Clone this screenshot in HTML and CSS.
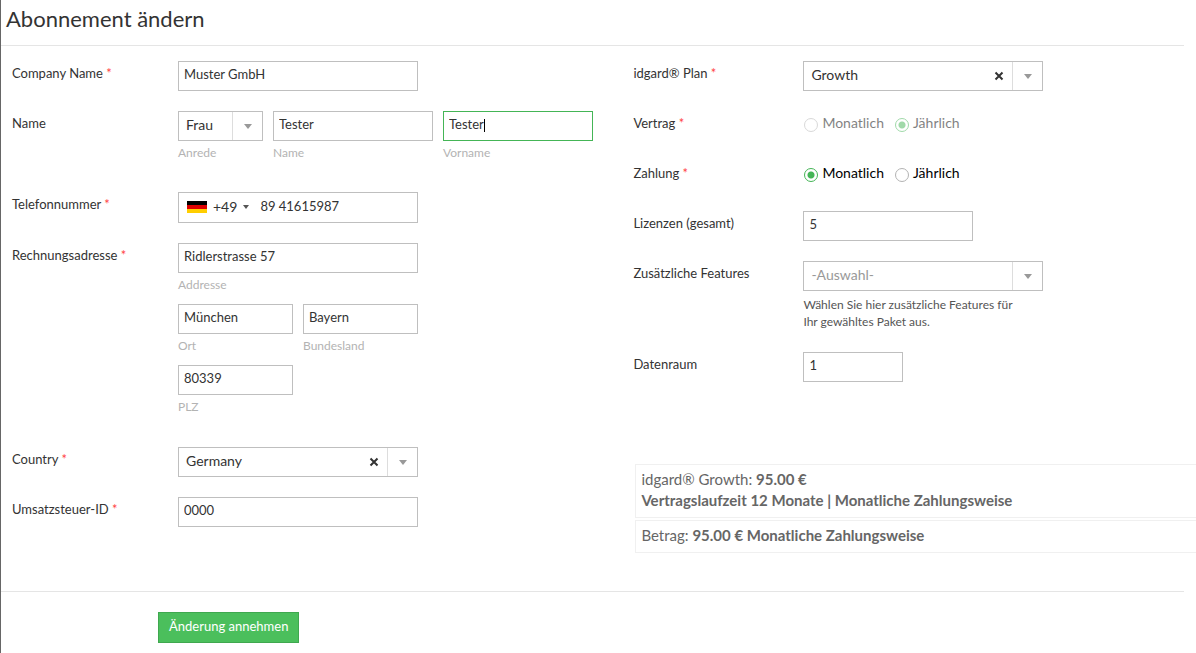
FILE: index.html
```html
<!DOCTYPE html>
<html lang="de">
<head>
    <meta charset="UTF-8">
    <meta name="viewport" content="width=device-width, initial-scale=1.0">
    <title>Abonnement ändern</title>
    <link rel="stylesheet" href="styles.css">
</head>
<body>

    <h1>Abonnement ändern</h1>

    <form>
        <div class="columns">

            <!-- Customer data -->
            <div class="column">
                <div class="row">
                    <label class="label" for="company">Company Name <span class="required">*</span></label>
                    <input class="wide" type="text" id="company" value="Muster GmbH">
                </div>

                <div class="row">
                    <label class="label" for="lastname">Name</label>
                    <div class="line">
                        <div class="field title-field">
                            <div class="select">
                                <select id="title"><option>Frau</option><option>Herr</option></select>
                                <span class="arrow"></span>
                            </div>
                            <label class="caption" for="title">Anrede</label>
                        </div>
                        <div class="field lastname-field">
                            <input type="text" id="lastname" value="Tester">
                            <label class="caption" for="lastname">Name</label>
                        </div>
                        <div class="field firstname-field">
                            <input type="text" id="firstname" value="Tester" autofocus>
                            <span class="cursor"></span>
                            <label class="caption" for="firstname">Vorname</label>
                        </div>
                    </div>
                </div>

                <div class="row">
                    <label class="label" for="phone">Telefonnummer <span class="required">*</span></label>
                    <div class="phone wide">
                        <button class="country-code" type="button" aria-label="Deutschland +49">
                            <svg class="flag" viewBox="0 0 20 12" width="20" height="12">
                                <rect width="20" height="4" fill="#000"/>
                                <rect y="4" width="20" height="4" fill="#d00"/>
                                <rect y="8" width="20" height="4" fill="#ffce00"/>
                            </svg>
                            +49
                            <span class="triangle"></span>
                        </button>
                        <input type="tel" id="phone" value="89 41615987">
                    </div>
                </div>

                <div class="row">
                    <label class="label" for="street">Rechnungsadresse <span class="required">*</span></label>
                    <div class="address wide">
                        <div class="line">
                            <div class="field">
                                <input type="text" id="street" value="Ridlerstrasse 57">
                                <label class="caption" for="street">Addresse</label>
                            </div>
                        </div>
                        <div class="line">
                            <div class="field half">
                                <input type="text" id="city" value="München">
                                <label class="caption" for="city">Ort</label>
                            </div>
                            <div class="field half">
                                <input type="text" id="state" value="Bayern">
                                <label class="caption" for="state">Bundesland</label>
                            </div>
                        </div>
                        <div class="line">
                            <div class="field half">
                                <input type="text" id="zip" value="80339">
                                <label class="caption" for="zip">PLZ</label>
                            </div>
                        </div>
                    </div>
                </div>

                <div class="row">
                    <label class="label" for="country">Country <span class="required">*</span></label>
                    <div class="select wide">
                        <select id="country"><option>Germany</option></select>
                        <button class="clear" type="button" aria-label="Auswahl löschen">
                            <svg viewBox="0 0 10 10" width="10" height="10"><path d="M1.5 1.5l7 7M8.5 1.5l-7 7"/></svg>
                        </button>
                        <span class="arrow"></span>
                    </div>
                </div>

                <div class="row">
                    <label class="label" for="vat">Umsatzsteuer-ID <span class="required">*</span></label>
                    <input class="wide" type="text" id="vat" value="0000">
                </div>
            </div>

            <!-- Plan and price -->
            <div class="column plan">
                <div class="row">
                    <label class="label" for="plan">idgard® Plan <span class="required">*</span></label>
                    <div class="select wide">
                        <select id="plan"><option>Growth</option></select>
                        <button class="clear" type="button" aria-label="Auswahl löschen">
                            <svg viewBox="0 0 10 10" width="10" height="10"><path d="M1.5 1.5l7 7M8.5 1.5l-7 7"/></svg>
                        </button>
                        <span class="arrow"></span>
                    </div>
                </div>

                <div class="row">
                    <span class="label">Vertrag <span class="required">*</span></span>
                    <div class="radio-group disabled">
                        <label><input type="radio" name="contract" disabled>Monatlich</label>
                        <label><input type="radio" name="contract" checked disabled>Jährlich</label>
                    </div>
                </div>

                <div class="row">
                    <span class="label">Zahlung <span class="required">*</span></span>
                    <div class="radio-group">
                        <label><input type="radio" name="payment" checked>Monatlich</label>
                        <label><input type="radio" name="payment">Jährlich</label>
                    </div>
                </div>

                <div class="row">
                    <label class="label" for="licenses">Lizenzen (gesamt)</label>
                    <input class="medium" type="text" id="licenses" value="5">
                </div>

                <div class="row">
                    <label class="label" for="features">Zusätzliche Features</label>
                    <div class="wide">
                        <div class="select placeholder">
                            <select id="features"><option>-Auswahl-</option></select>
                            <span class="arrow"></span>
                        </div>
                        <p class="help">Wählen Sie hier zusätzliche Features für Ihr gewähltes Paket aus.</p>
                    </div>
                </div>

                <div class="row">
                    <label class="label" for="dataroom">Datenraum</label>
                    <input class="small" type="text" id="dataroom" value="1">
                </div>

                <div class="summary">
                    <div class="summary-box">
                        idgard® Growth: <b>95.00 €</b><br>
                        <b>Vertragslaufzeit 12 Monate | Monatliche Zahlungsweise</b>
                    </div>
                    <div class="summary-box">
                        Betrag: <b>95.00 € Monatliche Zahlungsweise</b>
                    </div>
                </div>
            </div>
        </div>

        <div class="footer">
            <button class="submit" type="submit">Änderung annehmen</button>
        </div>
    </form>

    <script>
        // Put the cursor behind the first name
        const firstname = document.getElementById('firstname');
        firstname.focus();
        firstname.setSelectionRange(firstname.value.length, firstname.value.length);
    </script>

</body>
</html>
```
FILE: styles.css
```css
* {
    box-sizing: border-box;
}
body {
    font-family: Lato, sans-serif;
    font-size: 13px;
    color: #333;
    background-color: #fff;
    margin: 0;
    border-left: 1px solid #666;
    min-height: 100vh;
}
h1 {
    font-size: 22px;
    font-weight: normal;
    line-height: 28px;
    margin: 0 12px 0 0;
    padding: 5px 5px 12px;
    border-bottom: 1px solid #e5e5e5;
}
.columns {
    display: grid;
    grid-template-columns: 52% 1fr;
    padding-top: 15px;
}
.row {
    display: flex;
    align-items: flex-start;
    margin-bottom: 20px;
    padding-left: 11px;
}
.label {
    width: 166px;
    flex-shrink: 0;
    line-height: 20px;
    padding-top: 2px;
}
.plan .label {
    width: 170px;
}
.required {
    color: #f44;
}
input, select, button {
    font-family: inherit;
    font-size: 13px;
    color: #333;
}
input[type="text"] {
    width: 100%;
    height: 30px;
    padding: 0 5px 4px;
    border: 1px solid #bfbfbf;
    border-radius: 0;
    background-color: #fff;
}
input[type="text"]:focus {
    border-color: #44b556;
    outline: none;
    caret-color: transparent;
}
.wide, input.wide {
    width: 240px;
}
input.medium {
    width: 170px;
}
input.small {
    width: 100px;
}
.line {
    display: flex;
    gap: 10px;
    margin-bottom: 11px;
}
.address {
    padding-bottom: 1px;
}
.field {
    width: 100%;
}
.title-field {
    width: 85px;
}
.lastname-field {
    width: 160px;
}
.firstname-field {
    position: relative;
    width: 150px;
}
/* steady cursor instead of the blinking one */
.cursor {
    display: none;
    position: absolute;
    top: 8px;
    left: 41px;
    width: 1px;
    height: 13px;
    background-color: #000;
}
input:focus + .cursor {
    display: block;
}
.half {
    width: 115px;
}
.caption {
    display: block;
    font-size: 12px;
    line-height: 17px;
    margin-top: 3px;
    color: #b3b3b3;
}
.select {
    display: flex;
    height: 30px;
    border: 1px solid #bfbfbf;
}
.select select {
    flex: 1;
    min-width: 0;
    appearance: none;
    border: none;
    padding: 0 7px 3px;
    font-size: 14px;
    background: none;
    outline: none;
}
.placeholder select {
    color: #999;
}
.arrow {
    display: flex;
    align-items: center;
    justify-content: center;
    width: 30px;
    border-left: 1px solid #ddd;
}
.arrow::before {
    content: "";
    margin-top: 1px;
    border: 4px solid transparent;
    border-top: 5px solid #999;
    border-bottom: none;
}
.clear {
    width: 26px;
    padding: 0;
    border: none;
    background: none;
}
.clear path {
    stroke: #333;
    stroke-width: 2;
}
.phone {
    display: flex;
    height: 31px;
    border: 1px solid #bfbfbf;
}
.country-code {
    display: flex;
    align-items: center;
    gap: 6px;
    padding: 0 0 2px 8px;
    border: none;
    background: none;
    font-size: 14px;
}
.triangle {
    border: 3px solid transparent;
    border-top: 4px solid #555;
    border-bottom: none;
}
.phone input {
    flex: 1;
    min-width: 0;
    border: none;
    outline: none;
    padding: 0 5px 4px 11px;
}
.radio-group {
    display: flex;
    gap: 10px;
    height: 30px;
    font-size: 14px;
    line-height: 24px;
    color: #000;
}
.radio-group label {
    display: flex;
    gap: 4px;
}
.radio-group.disabled {
    opacity: 0.5;
}
input[type="radio"] {
    appearance: none;
    width: 14px;
    height: 14px;
    margin: 7px 0 0 1px;
    border: 1px solid #b3b3b3;
    border-radius: 50%;
    background-color: #fff;
}
input[type="radio"]:checked {
    border-color: #44b556;
    background: radial-gradient(circle, #44b556 3px, #fff 4px);
}
.help {
    max-width: 220px;
    font-size: 12px;
    line-height: 17px;
    margin: 5px 0 2px;
    color: #555;
}
.summary {
    display: flex;
    flex-direction: column;
    gap: 2px;
    margin: 82px 0 0 13px;
    font-size: 15px;
    line-height: 21px;
    color: #666;
}
.summary-box {
    padding: 4px 5px 6px;
    border: 1px solid #f0f0f0;
    border-right: none;
}
.footer {
    margin: 38px 12px 0 0;
    padding: 20px 0 10px 157px;
    border-top: 1px solid #e5e5e5;
}
.submit {
    height: 31px;
    padding: 0 10px 3px;
    border: 1px solid #3fa84f;
    background-color: #4bbf5c;
    color: #fff;
    cursor: pointer;
}
```
